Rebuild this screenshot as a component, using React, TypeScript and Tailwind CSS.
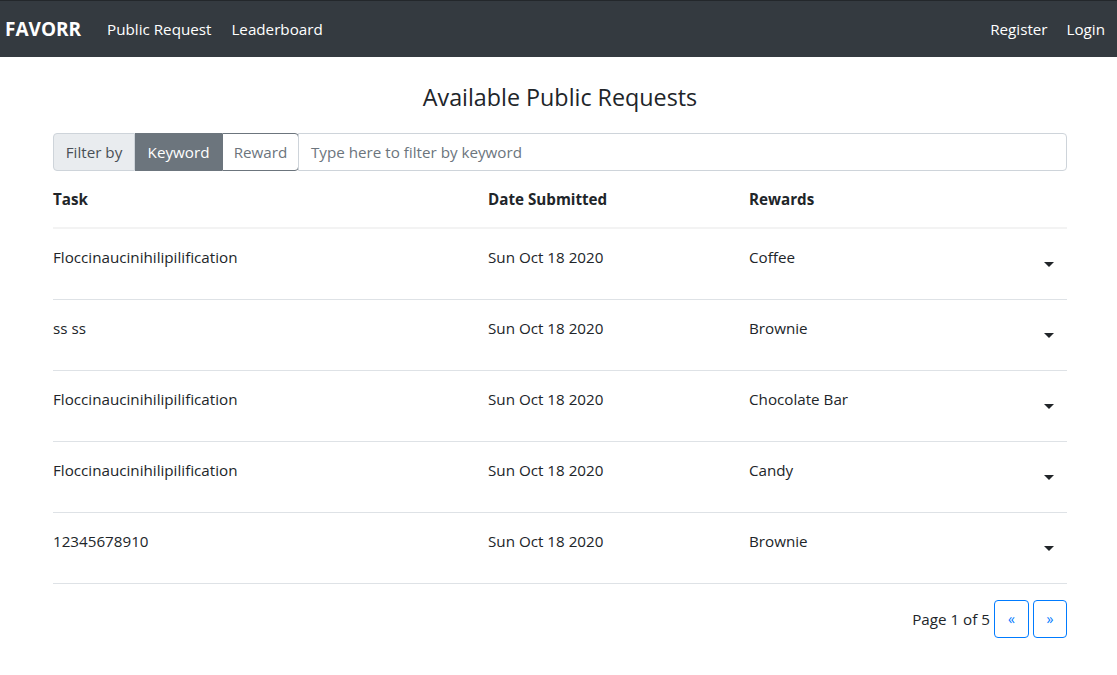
import React from "react";

const rows = [
  { task: "Floccinaucinihilipilification", date: "Sun Oct 18 2020", reward: "Coffee" },
  { task: "ss ss", date: "Sun Oct 18 2020", reward: "Brownie" },
  { task: "Floccinaucinihilipilification", date: "Sun Oct 18 2020", reward: "Chocolate Bar" },
  { task: "Floccinaucinihilipilification", date: "Sun Oct 18 2020", reward: "Candy" },
  { task: "12345678910", date: "Sun Oct 18 2020", reward: "Brownie" },
];

function Caret() {
  return (
    <svg width="10" height="5" viewBox="0 0 10 5" className="block">
      <path d="M0 0 L10 0 L5 5 Z" fill="#212529" />
    </svg>
  );
}

export default function App() {
  return (
    <div
      className="min-h-[675px] bg-white text-[#212529] text-[15.2px] leading-6"
      style={{ fontFamily: '"Open Sans", "Noto Sans", sans-serif' }}
    >
      <nav className="h-[57px] bg-[#343a40] border-t border-[#23272b] flex items-center justify-between pl-[5px] pr-[12px]">
        <div className="flex items-center">
          <span className="text-white font-bold text-[19px] mr-[26px]">FAVORR</span>
          <span className="text-white mr-[20px]">Public Request</span>
          <span className="text-white">Leaderboard</span>
        </div>
        <div className="flex items-center">
          <span className="text-white mr-[19px]">Register</span>
          <span className="text-white">Login</span>
        </div>
      </nav>

      <main className="pl-[53px] pr-[50px]">
        <h3 className="text-center text-[23.3px] font-medium leading-[29px] mt-[26px] mb-[21px]">
          Available Public Requests
        </h3>

        <div className="flex h-[38px]">
          <div className="w-[82px] flex items-center justify-center bg-[#e9ecef] border border-[#ced4da] rounded-l-[4px] text-[#495057]">
            Filter by
          </div>
          <div className="w-[87px] flex items-center justify-center bg-[#6c757d] border border-[#6c757d] text-white">
            Keyword
          </div>
          <div className="w-[77px] flex items-center justify-center bg-white border border-[#6c757d] text-[#6c757d] rounded-r-[4px]">
            Reward
          </div>
          <div className="flex-1 flex items-center px-[12px] border border-[#ced4da] rounded-r-[4px] text-[#6c757d] -ml-px">
            Type here to filter by keyword
          </div>
        </div>

        <div className="flex h-[58px] items-center font-bold border-b-2 border-[#f3f3f3]">
          <div className="w-[435px]">Task</div>
          <div className="w-[261px]">Date Submitted</div>
          <div className="flex-1">Rewards</div>
        </div>

        {rows.map((r, i) => (
          <div key={i} className="flex h-[71px] border-b border-[#dee2e6]">
            <div className="w-[435px] pt-[16px]">{r.task}</div>
            <div className="w-[261px] pt-[16px]">{r.date}</div>
            <div className="flex-1 pt-[16px]">{r.reward}</div>
            <div className="w-[23px] pt-[33px]">
              <Caret />
            </div>
          </div>
        ))}

        <div className="flex justify-end items-center mt-[16px]">
          <span className="mr-[4px]">Page 1 of 5</span>
          <button className="w-[35px] h-[38px] border border-[#007bff] rounded-[4px] text-[#007bff] text-[14px] mr-[4px]">
            «
          </button>
          <button className="w-[34px] h-[38px] border border-[#007bff] rounded-[4px] text-[#007bff] text-[14px]">
            »
          </button>
        </div>
      </main>
    </div>
  );
}
